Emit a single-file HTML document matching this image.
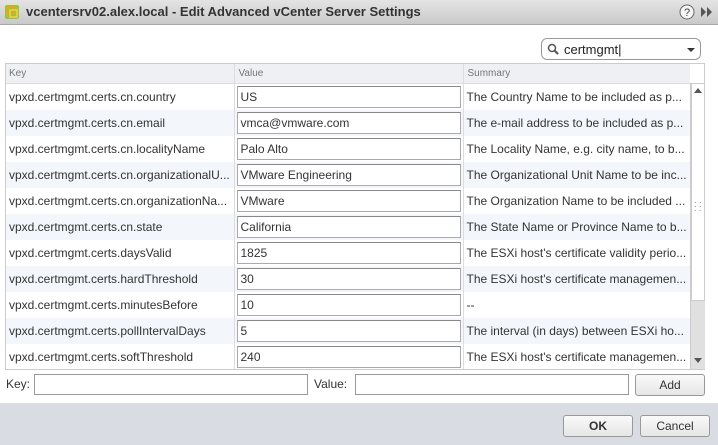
<!DOCTYPE html>
<html><head><style>
*{box-sizing:border-box;margin:0;padding:0}
body{width:718px;height:445px;overflow:hidden;font-family:"Liberation Sans",Arial,sans-serif;font-size:12px;color:#333;background:#fff;position:relative}
.title{position:absolute;left:0;top:0;width:718px;height:25px;background:linear-gradient(#e4e4e4,#c9c9c9);border-bottom:1px solid #a8a8a8}
.title .t{position:absolute;left:26px;top:4px;font-size:13px;font-weight:bold;color:#333}
.ab{position:absolute}
.search{left:541px;top:38px;width:160px;height:22px;border:1px solid #999;border-radius:6px;background:#fff}
table{position:absolute;left:5px;top:63px;border-collapse:collapse;width:685px;table-layout:fixed;font-size:12px}
td,th{height:26px;border-right:1px solid #ddd;padding:0 4px;white-space:nowrap;overflow:hidden;text-overflow:clip;font-weight:normal;text-align:left}
th{height:20px;background:#eef0f3;color:#777;font-size:10px;border-bottom:1px solid #ddd;border-top:1px solid #ddd}
tr:nth-child(odd) td{background:#f3f6fa}
td .in{height:22px;border:1px solid #aaa;border-top-color:#888;background:#fff;padding:2px 3px;margin-left:-2px;margin-right:-2px;line-height:16px}
td.s{padding-left:3px;border-left:1px solid #aaa}
.inp{position:absolute;height:21px;border:1px solid #999;background:#fff}
.btn{position:absolute;height:22px;border:1px solid #999;border-radius:3px;background:linear-gradient(#fafafa,#e6e6e6);text-align:center;line-height:20px;font-size:12px}
</style></head><body>
<div class="title">
<svg class="ab" style="left:4px;top:4px" width="16" height="16"><rect x="1" y="1" width="14" height="14" fill="#9bc43c" rx="2"/><rect x="3" y="3" width="7" height="7" fill="none" stroke="#f4a020" stroke-width="1.5"/><rect x="6" y="6" width="7" height="7" fill="none" stroke="#f8d040" stroke-width="1.5"/></svg>
<span class="t">vcentersrv02.alex.local - Edit Advanced vCenter Server Settings</span>
<svg class="ab" style="left:679px;top:4px" width="16" height="16"><circle cx="8" cy="8" r="7" fill="#f6f6f6" stroke="#666"/><text x="8" y="12" font-size="11" text-anchor="middle" fill="#444" font-family="Liberation Sans">?</text></svg>
<svg class="ab" style="left:701px;top:7px" width="12" height="10"><path d="M0 0L5 5L0 10ZM6 0L11 5L6 10Z" fill="#555"/></svg>
</div>
<div class="ab search"><svg class="ab" style="left:5px;top:4px" width="12" height="12"><circle cx="5" cy="5" r="3.5" fill="none" stroke="#555" stroke-width="1.5"/><path d="M7.5 7.5L11 11" stroke="#555" stroke-width="2"/></svg><span class="ab" style="left:22px;top:3px;font-size:13px;color:#222">certmgmt|</span><svg class="ab" style="left:145px;top:9px" width="8" height="5"><path d="M0 0H8L4 4Z" fill="#333"/></svg></div>
<table>
<colgroup><col style="width:229px"><col style="width:229px"><col style="width:227px"></colgroup>
<tr><th>Key</th><th>Value</th><th style="border-right:none">Summary</th></tr>
<tr><td>vpxd.certmgmt.certs.cn.country</td><td><div class="in">US</div></td><td class="s">The Country Name to be included as p...</td></tr>
<tr><td>vpxd.certmgmt.certs.cn.email</td><td><div class="in">vmca@vmware.com</div></td><td class="s">The e-mail address to be included as p...</td></tr>
<tr><td>vpxd.certmgmt.certs.cn.localityName</td><td><div class="in">Palo Alto</div></td><td class="s">The Locality Name, e.g. city name, to b...</td></tr>
<tr><td>vpxd.certmgmt.certs.cn.organizationalU...</td><td><div class="in">VMware Engineering</div></td><td class="s">The Organizational Unit Name to be inc...</td></tr>
<tr><td>vpxd.certmgmt.certs.cn.organizationNa...</td><td><div class="in">VMware</div></td><td class="s">The Organization Name to be included ...</td></tr>
<tr><td>vpxd.certmgmt.certs.cn.state</td><td><div class="in">California</div></td><td class="s">The State Name or Province Name to b...</td></tr>
<tr><td>vpxd.certmgmt.certs.daysValid</td><td><div class="in">1825</div></td><td class="s">The ESXi host's certificate validity perio...</td></tr>
<tr><td>vpxd.certmgmt.certs.hardThreshold</td><td><div class="in">30</div></td><td class="s">The ESXi host's certificate managemen...</td></tr>
<tr><td>vpxd.certmgmt.certs.minutesBefore</td><td><div class="in">10</div></td><td class="s">--</td></tr>
<tr><td>vpxd.certmgmt.certs.pollIntervalDays</td><td><div class="in">5</div></td><td class="s">The interval (in days) between ESXi ho...</td></tr>
<tr><td>vpxd.certmgmt.certs.softThreshold</td><td><div class="in">240</div></td><td class="s">The ESXi host's certificate managemen...</td></tr>
</table>
<div class="ab" style="left:5px;top:63px;width:700px;height:307px;border:1px solid #ccc;pointer-events:none"></div>
<div class="ab" style="left:690px;top:83px;width:15px;height:286px;background:#e0e0e0;border-left:1px solid #ccc">
<div class="ab" style="left:0;top:0;width:14px;height:218px;background:#fff;border:1px solid #ccc"></div>
<svg class="ab" style="left:3px;top:5px" width="8" height="5"><path d="M0 5H8L4 0Z" fill="#555"/></svg>
<svg class="ab" style="left:3px;top:275px" width="8" height="5"><path d="M0 0H8L4 5Z" fill="#555"/></svg>
</div>
<div class="ab" style="left:694px;top:202px;font-size:9px;color:#888;line-height:4px">: :<br>: :</div>
<span class="ab" style="left:6px;top:377px">Key:</span>
<div class="inp" style="left:34px;top:374px;width:274px"></div>
<span class="ab" style="left:314px;top:377px">Value:</span>
<div class="inp" style="left:355px;top:374px;width:274px"></div>
<div class="btn" style="left:635px;top:374px;width:70px">Add</div>
<div class="ab" style="left:0;top:403px;width:718px;height:42px;background:#d9dde3"></div>
<div class="btn" style="left:563px;top:415px;width:70px;font-weight:bold">OK</div>
<div class="btn" style="left:640px;top:415px;width:70px">Cancel</div>
</body></html>
